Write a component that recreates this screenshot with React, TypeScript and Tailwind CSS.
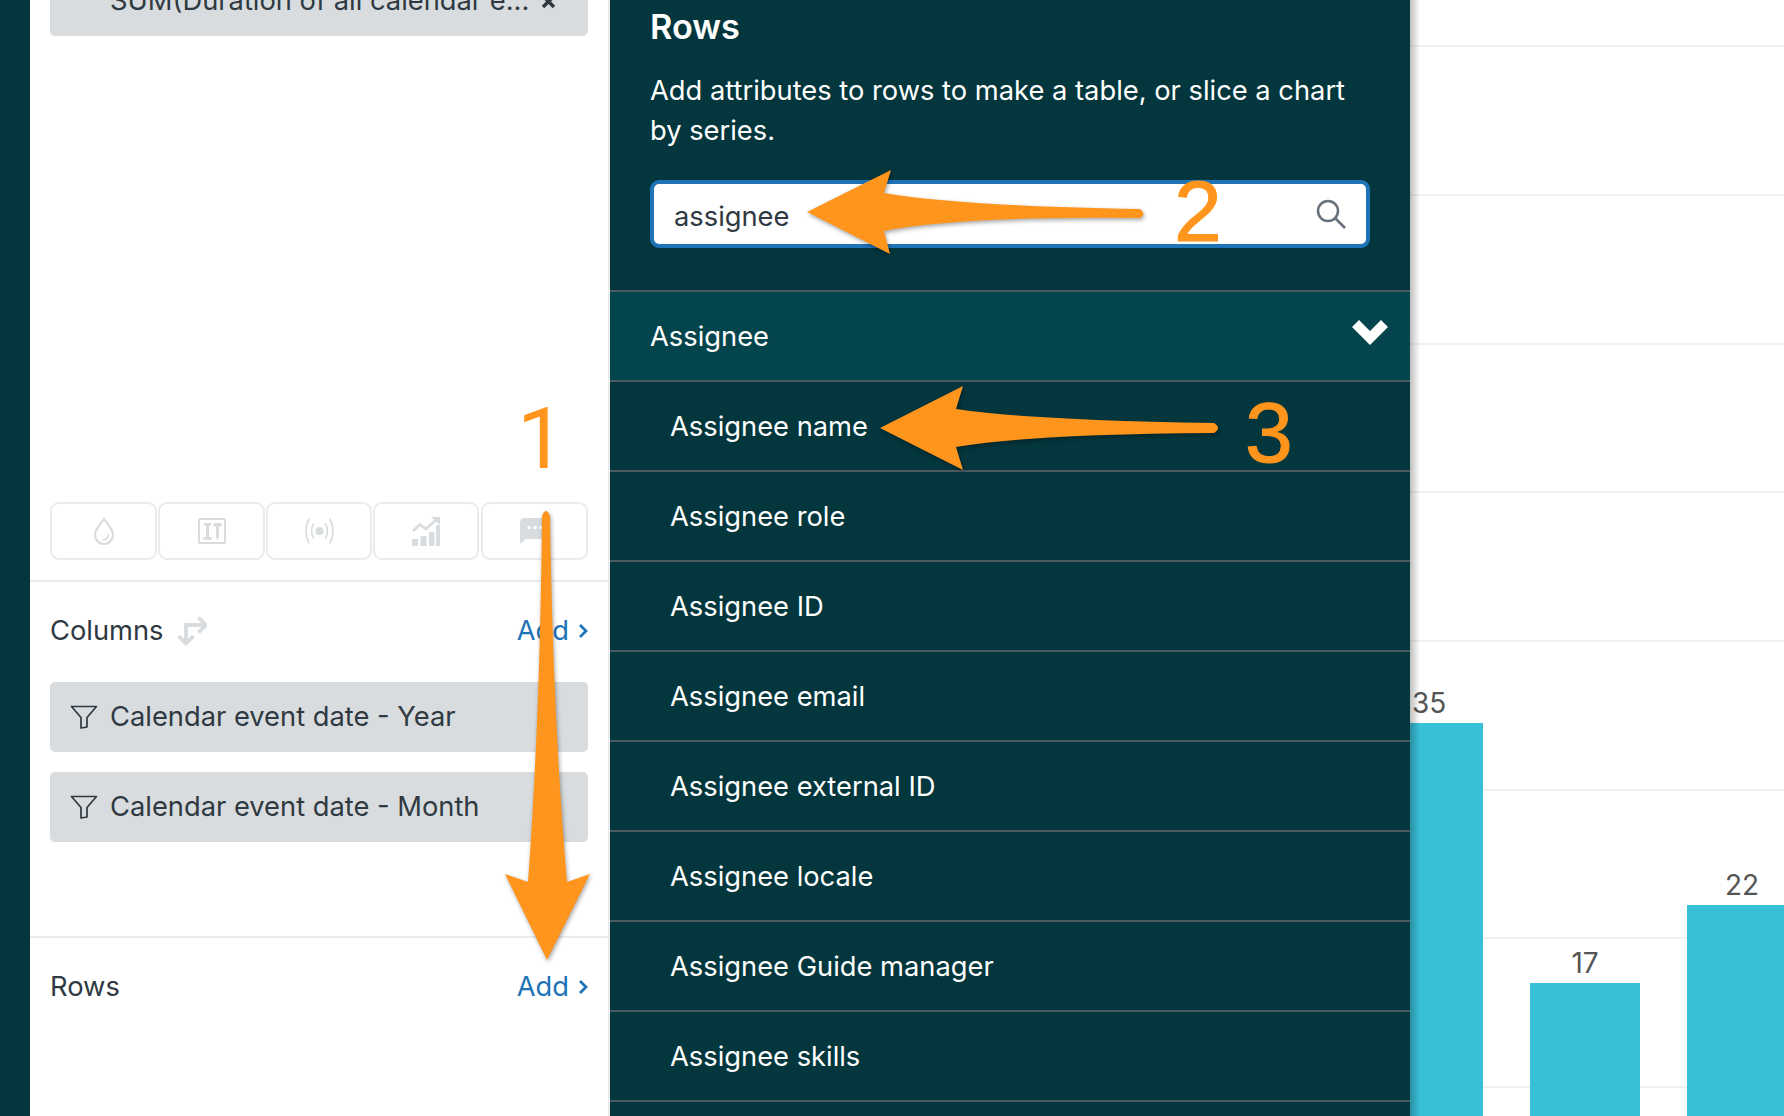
import React from "react";

const font = { fontFamily: "Inter, 'Noto Sans', sans-serif" };

function Drop() {
  return (
    <svg width="22" height="28" viewBox="0 0 22 28" fill="none" stroke="#d8dcde" strokeWidth="2.2">
      <path d="M11 2 C7 8 2 12 2 18 a9 9 0 0 0 18 0 C20 12 15 8 11 2 Z" />
      <path d="M15.5 17 c0 3.5 -2 5.5 -6 6" strokeWidth="1.6" />
    </svg>
  );
}
function BoxTools() {
  return (
    <svg width="28" height="26" viewBox="0 0 28 26" fill="none">
      <rect x="1" y="1" width="26" height="24" rx="1" stroke="#d8dcde" strokeWidth="2" />
      <path d="M6 5h7v2.500h-2v11.500h2.500v3h-8v-3h2.500V7.500H6z M15.500 5h8v3.500h-2.500V19l-1.500 3-1.500-3V8.500h-2.500z" fill="#d8dcde" />
    </svg>
  );
}
function Broadcast() {
  return (
    <svg width="29" height="28" viewBox="0 0 29 28" fill="none" stroke="#d8dcde" strokeWidth="1.600" strokeLinecap="round">
      <circle cx="14.500" cy="14" r="4" fill="#d8dcde" stroke="none" />
      <path d="M8.500 7 C6 11 6 17 8.500 21" />
      <path d="M20.500 7 C23 11 23 17 20.500 21" />
      <path d="M4 2 C0 9 0 19 4 26" />
      <path d="M25 2 C29 9 29 19 25 26" />
    </svg>
  );
}
function ChartUp() {
  return (
    <svg width="28" height="30" viewBox="0 0 28 30" fill="none">
      <path d="M0 23h6v7H0z M8.500 20h6v10h-6z M17 16h5.500v14H17z M24 9h4v21h-4z" fill="#d8dcde" />
      <path d="M1 15 L8 8.500 L14 13 L25 3" stroke="#d8dcde" strokeWidth="2.600" />
      <path d="M19 1h9v8z" fill="#d8dcde" />
    </svg>
  );
}
function Chat() {
  return (
    <svg width="30" height="26" viewBox="0 0 30 26" fill="none">
      <path d="M4 0h22a4 4 0 0 1 4 4v13a4 4 0 0 1-4 4H6l-6 5V4a4 4 0 0 1 4-4z" fill="#d8dcde" />
      <circle cx="9" cy="9.500" r="1.700" fill="#fff" />
      <circle cx="15" cy="9.500" r="1.700" fill="#fff" />
      <circle cx="21" cy="9.500" r="1.700" fill="#fff" />
    </svg>
  );
}
function Swap() {
  return (
    <svg width="30" height="30" viewBox="0 0 30 30" fill="none" stroke="#d8dcde" strokeWidth="3.800">
      <path d="M29 9 H9 V27" />
      <path d="M21.500 1.500 L29 9 L21.500 16.500" />
      <path d="M1.500 20 L9 27.500 L16.500 20" />
    </svg>
  );
}
function Funnel() {
  return (
    <svg width="28" height="24" viewBox="0 0 28 24" fill="none" stroke="#2f3941" strokeWidth="1.700" strokeLinejoin="round">
      <path d="M1.500 1.500 H26.500 L17 12.500 V22 L11 23 V12.500 Z" />
    </svg>
  );
}
function AddLink() {
  return (
    <span className="flex items-center gap-[9px] text-[#1f73b7]">
      <span>Add</span>
      <svg width="10" height="16" viewBox="0 0 10 16" fill="none" stroke="#1f73b7" strokeWidth="2.800">
        <path d="M2 2 L8 8 L2 14" />
      </svg>
    </span>
  );
}
function Pill({ label }: { label: string }) {
  return (
    <div className="flex h-[70px] items-center rounded-[5px] bg-[#d8dcde] pl-[20px] text-[#2f3941]">
      <Funnel />
      <span className="ml-[12px]">{label}</span>
    </div>
  );
}

const rows = [
  "Assignee name",
  "Assignee role",
  "Assignee ID",
  "Assignee email",
  "Assignee external ID",
  "Assignee locale",
  "Assignee Guide manager",
  "Assignee skills",
];

const grid = [46, 195, 344, 492, 641, 790, 938, 1087];

function Arrow({ d }: { d: string }) {
  return <path d={d} fill="#ff951c" className="drop-shadow-[1px_2px_2px_rgba(0,0,0,0.35)]" />;
}

export default function App() {
  return (
    <div className="relative flex h-[1116px] w-[1784px] overflow-hidden bg-white text-[27.3px] leading-[40px]" style={font}>
      <div className="w-[30px] shrink-0 bg-[#03363d]" />

      <div className="flex w-[580px] shrink-0 flex-col border-r-2 border-[#e9ebed] bg-white">
        <div className="px-[20px]">
          <div className="-mt-[34px] flex h-[70px] items-center rounded-[5px] bg-[#d8dcde] pl-[60px] pr-[32px] text-[#2f3941]">
            <span className="flex-1 truncate">SUM(Duration of all calendar e...</span>
            <svg width="15" height="15" viewBox="0 0 15 15" stroke="#2f3941" strokeWidth="3.500">
              <path d="M2 2 L13 13 M13 2 L2 13" />
            </svg>
          </div>
          <div className="mt-[466px] flex h-[58px] gap-[1px]">
            {[
              [<Drop key="a" />, "w-[107px]"],
              [<BoxTools key="b" />, "w-[107px]"],
              [<Broadcast key="c" />, "w-[106px]"],
              [<ChartUp key="d" />, "w-[106px]"],
              [<Chat key="e" />, "ml-[1px] w-[107px]"],
            ].map(([icon, w], i) => (
              <div key={i} className={`flex items-center justify-center rounded-[9px] border-2 border-[#e9ebed] ${w}`}>
                {icon}
              </div>
            ))}
          </div>
        </div>

        <div className="mt-[20px] h-[2px] bg-[#e9ebed]" />

        <div className="px-[20px] pt-[29px]">
          <div className="flex h-[40px] items-center justify-between text-[#2f3941]">
            <span className="flex items-center gap-[13px]">
              Columns <Swap />
            </span>
            <AddLink />
          </div>
          <div className="mt-[31px] flex flex-col gap-[20px]">
            <Pill label="Calendar event date - Year" />
            <Pill label="Calendar event date - Month" />
          </div>
        </div>

        <div className="mt-[94px] h-[2px] bg-[#e9ebed]" />

        <div className="px-[20px] pt-[29px]">
          <div className="flex h-[40px] items-center justify-between text-[#2f3941]">
            <span>Rows</span>
            <AddLink />
          </div>
        </div>
      </div>

      <div className="relative flex w-[800px] shrink-0 flex-col bg-[#03363d] text-white">
        <div className="px-[40px] pt-[7px]">
          <div className="text-[34.3px] font-semibold">Rows</div>
          <p className="mt-[24px]">
            Add attributes to rows to make a table, or slice a chart
            <br />
            by series.
          </p>
          <div className="mt-[29px] flex h-[68px] w-[720px] items-center justify-between rounded-[9px] border-[4px] border-[#1f73b7] bg-white pl-[20px] pr-[20px] text-[#2f3941]">
            <span className="pt-[5px]">assignee</span>
            <svg width="30" height="30" viewBox="0 0 30 30" fill="none" stroke="#68737d" strokeWidth="2.600">
              <circle cx="12" cy="12" r="10" />
              <path d="M19 19 L29 29" />
            </svg>
          </div>
        </div>
        <div className="mt-[42px] flex h-[90px] items-center justify-between border-t-2 border-[#4d5b60] bg-[#04444d] pl-[40px] pr-[22px]">
          <span className="pt-[1px]">Assignee</span>
          <svg width="36" height="26" viewBox="0 0 36 26" className="-mt-[6px]" fill="#fff">
            <path d="M0 7 L7 0 L18 11 L29 0 L36 7 L18 25 Z" />
          </svg>
        </div>
        {rows.map((r) => (
          <div key={r} className="flex h-[90px] shrink-0 items-center border-t-2 border-[#4d5b60] pl-[60px] pt-[1px]">
            {r}
          </div>
        ))}
        <div className="border-t-2 border-[#4d5b60]" />
      </div>

      <div className="relative flex-1">
        <svg className="block h-full w-full" viewBox="1410 0 374 1116">
          {grid.map((y) => (
            <rect key={y} x="1410" y={y - 1} width="374" height="2" fill="#f0f1f1" />
          ))}
          <rect x="1410" y="723" width="73" height="393" fill="#38c0d8" />
          <rect x="1530" y="983" width="110" height="133" fill="#38c0d8" />
          <rect x="1687" y="905" width="97" height="211" fill="#38c0d8" />
          <text x="1412" y="713" fontSize="28" fill="#555">35</text>
          <text x="1585" y="973" fontSize="28" fill="#555" textAnchor="middle">17</text>
          <text x="1742" y="895" fontSize="28" fill="#555" textAnchor="middle">22</text>
        </svg>
        <div className="absolute inset-y-0 left-0 w-[10px] bg-gradient-to-r from-black/25 to-transparent" />
      </div>

      <svg className="pointer-events-none absolute inset-0" width="1784" height="1116" viewBox="0 0 1784 1116">
        <Arrow d="M542 516 Q546 506 550 516 Q553 720 567 882 L590 874 L547 960 L505 874 L528 882 Q540 720 542 516 Z" />
        <Arrow d="M807 212 L891 170 L884 193 Q960 206 1140 209 Q1147 214 1140 218 Q960 216 884 231 L890 254 Z" />
        <Arrow d="M880 428 L963 386 L956 409 Q1030 420 1214 423 Q1222 428 1214 433 Q1030 434 956 447 L963 470 Z" />
        <g fill="#ff951c" style={{ fontFamily: "'Liberation Sans', Arial, sans-serif" }} fontSize="86">
          <text x="517" y="468" style={{ fontFamily: "Roboto, sans-serif" }}>1</text>
          <text x="1174" y="241" stroke="#ff951c" strokeWidth="1">2</text>
          <text x="1245" y="462" stroke="#ff951c" strokeWidth="1">3</text>
        </g>
      </svg>
    </div>
  );
}
